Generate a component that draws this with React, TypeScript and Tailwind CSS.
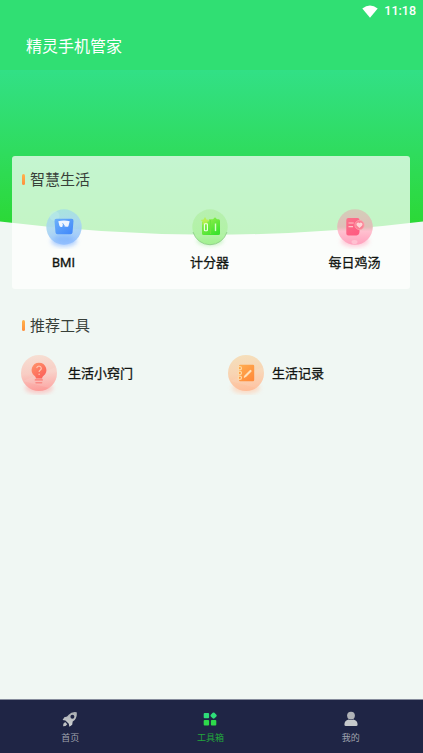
import type { ReactNode } from "react";

interface Tool {
  label: string;
  icon: ReactNode;
}

function BmiIcon() {
  return (
    <svg width="44" height="44" viewBox="0 0 44 44">
      <defs>
        <linearGradient id="bmiBall" x1="0.3" y1="0" x2="0.5" y2="1">
          <stop offset="0" stopColor="#a5e2e0" />
          <stop offset="0.5" stopColor="#a9d6f0" />
          <stop offset="1" stopColor="#93bfff" />
        </linearGradient>
        <linearGradient id="bmiBox" x1="0" y1="0" x2="1" y2="1">
          <stop offset="0" stopColor="#6cb0fa" />
          <stop offset="1" stopColor="#3f86fb" />
        </linearGradient>
        <filter id="soft" x="-50%" y="-50%" width="200%" height="200%">
          <feGaussianBlur stdDeviation="2" />
        </filter>
      </defs>
      <ellipse cx="22" cy="36" rx="13" ry="6" fill="#9cc4ff" opacity="0.7" filter="url(#soft)" />
      <circle cx="22" cy="22" r="17.7" fill="url(#bmiBall)" opacity="0.9" />
      <circle cx="12.5" cy="11" r="5" fill="#c3f0ee" opacity="0.4" />
      <ellipse cx="22" cy="34" rx="10" ry="4" fill="#6fa9ff" opacity="0.4" filter="url(#soft)" />
      <path d="M14.5 13.8h15a2 2 0 0 1 2 2.2l-1 11.5a2 2 0 0 1-2 1.8h-13a2 2 0 0 1-2-1.8l-1-11.5a2 2 0 0 1 2-2.2z" fill="url(#bmiBox)" />
      <path d="M16.3 16.3Q22 14.6 27.7 16.3L26.4 21.2Q25.8 22 24.6 21.7L22.6 21.5 21 19 20.4 21.7Q18.5 22.5 17.5 21.1z" fill="#fff" opacity="0.9" />
      <path d="M20.6 18.2l2 3" stroke="#66a7fa" strokeWidth="0.9" />
    </svg>
  );
}

function ScoreIcon() {
  return (
    <svg width="44" height="44" viewBox="0 0 44 44">
      <defs>
        <linearGradient id="scoreBall" x1="0.5" y1="0" x2="0.5" y2="1">
          <stop offset="0" stopColor="#b6efad" />
          <stop offset="0.65" stopColor="#b0f2a3" />
          <stop offset="1" stopColor="#9df08a" />
        </linearGradient>
        <linearGradient id="scoreBox" x1="0" y1="0" x2="0.7" y2="1">
          <stop offset="0" stopColor="#a5f052" />
          <stop offset="1" stopColor="#3be32d" />
        </linearGradient>
      </defs>
      <ellipse cx="22" cy="35.5" rx="13" ry="5" fill="#a5eda0" opacity="0.65" filter="url(#soft)" />
      <circle cx="22" cy="22" r="17.7" fill="url(#scoreBall)" opacity="0.9" />
      <path d="M5 27a17.7 17.7 0 0 0 34 0" fill="none" stroke="#75b772" strokeWidth="0.8" opacity="0.7" />
      <path d="M25 14.3l2-2 2 2h1.5a1.5 1.5 0 0 1 1.5 1.5v12.7a1.5 1.5 0 0 1-1.5 1.5h-15a1.5 1.5 0 0 1-1.5-1.5V17.8a1.5 1.5 0 0 1 1.5-1.5h5.5v-2z" fill="url(#scoreBox)" />
      <path d="M17 12l1.4 2.5 2.8.4-2 2 .5 2.8-2.7-1.3-2.7 1.3.5-2.8-2-2 2.8-.4z" fill="#b9f04b" opacity="0.9" />
      <rect x="16.4" y="18.8" width="3" height="7" rx="0.7" fill="none" stroke="#f1ffe8" strokeWidth="1.1" />
      <path d="M27.5 18.5v7.6" stroke="#d6ffc8" strokeWidth="1.4" />
      <path d="M22.5 15v14" stroke="#69e53c" strokeWidth="1" />
    </svg>
  );
}

function SoupIcon() {
  return (
    <svg width="44" height="44" viewBox="0 0 44 44">
      <defs>
        <linearGradient id="soupBall" x1="0.5" y1="0" x2="0.5" y2="1">
          <stop offset="0" stopColor="#d3ceb9" />
          <stop offset="0.5" stopColor="#e0bfb9" />
          <stop offset="0.62" stopColor="#ffc0cf" />
          <stop offset="1" stopColor="#ffa0bd" />
        </linearGradient>
        <linearGradient id="soupBook" x1="0" y1="0" x2="0.5" y2="1">
          <stop offset="0" stopColor="#fa748b" />
          <stop offset="1" stopColor="#ff5c82" />
        </linearGradient>
      </defs>
      <ellipse cx="22" cy="36" rx="14" ry="6" fill="#ffb5ca" opacity="0.65" filter="url(#soft)" />
      <circle cx="22" cy="22" r="17.8" fill="url(#soupBall)" />
      <ellipse cx="21.5" cy="37" rx="3" ry="2" fill="#ffd2dc" opacity="0.6" />
      <path d="M15.3 13h9.2a2 2 0 0 1 2 2v11.5q0 3.5-3 4h-8.2a2 2 0 0 1-2-2V15a2 2 0 0 1 2-2z" fill="url(#soupBook)" />
      <path d="M15.5 18h5.2M15.5 21.7h4.5" stroke="#ffc5c7" strokeWidth="1.2" />
      <circle cx="26.5" cy="20" r="4.6" fill="#fa8193" stroke="#fca0ab" strokeWidth="0.9" />
      <path d="M26.5 23l-2.7-2.6a1.7 1.7 0 0 1 2.7-2.1 1.7 1.7 0 0 1 2.7 2.1z" fill="#ffd6d8" />
    </svg>
  );
}

function TipsIcon() {
  return (
    <svg width="44" height="44" viewBox="0 0 44 44">
      <defs>
        <linearGradient id="tipsBall" x1="0.4" y1="0" x2="0.5" y2="1">
          <stop offset="0" stopColor="#f6dfd3" />
          <stop offset="0.5" stopColor="#f8cdc4" />
          <stop offset="1" stopColor="#fd9b98" />
        </linearGradient>
        <linearGradient id="tipsBulb" x1="0" y1="0" x2="0.7" y2="1">
          <stop offset="0" stopColor="#ff966b" />
          <stop offset="1" stopColor="#fc6059" />
        </linearGradient>
      </defs>
      <ellipse cx="22" cy="37" rx="14" ry="6" fill="#fdb5b2" opacity="0.65" filter="url(#soft)" />
      <circle cx="22" cy="22" r="18" fill="url(#tipsBall)" />
      <path d="M6 30L39 16a18 18 0 0 1-7 21z" fill="#fff" opacity="0.1" />
      <path d="M22 11.7a7.4 7.4 0 0 0-4.3 13.4q1.2 1 1.2 2.4h6.2q0-1.4 1.2-2.4A7.4 7.4 0 0 0 22 11.7z" fill="url(#tipsBulb)" />
      <path d="M18.3 28.9h7" stroke="#fb7770" strokeWidth="1.3" strokeLinecap="round" />
      <path d="M19 31.7h5.6" stroke="#fa8a84" strokeWidth="1.5" strokeLinecap="round" />
      <path d="M19.7 17.2q.3-2 2.3-2t2.3 2q0 1.2-1.2 2-1 .7-1 1.9" fill="none" stroke="#ffc5b2" strokeWidth="1.2" />
      <circle cx="22.1" cy="23.2" r="0.75" fill="#ffc5b2" />
    </svg>
  );
}

function NotesIcon() {
  return (
    <svg width="44" height="44" viewBox="0 0 44 44">
      <defs>
        <linearGradient id="notesBall" x1="0.4" y1="0" x2="0.5" y2="1">
          <stop offset="0" stopColor="#f5dfbb" />
          <stop offset="0.5" stopColor="#f8d4b3" />
          <stop offset="1" stopColor="#ffbd99" />
        </linearGradient>
        <linearGradient id="notesBook" x1="0" y1="0" x2="0.7" y2="1">
          <stop offset="0" stopColor="#ffad50" />
          <stop offset="1" stopColor="#ff8c3b" />
        </linearGradient>
      </defs>
      <ellipse cx="22" cy="37" rx="14" ry="6" fill="#ffceb0" opacity="0.65" filter="url(#soft)" />
      <circle cx="22" cy="22" r="18" fill="url(#notesBall)" />
      <path d="M6 30L39 16a18 18 0 0 1-7 21z" fill="#fff" opacity="0.08" />
      <rect x="15" y="13.8" width="15.2" height="16.4" rx="1.2" fill="url(#notesBook)" />
      <g fill="none" stroke="#ffdda9" strokeWidth="1.1">
        <circle cx="15.8" cy="17.2" r="1.7" />
        <circle cx="15.8" cy="22" r="1.7" />
        <circle cx="15.8" cy="26.8" r="1.7" />
      </g>
      <path d="M21.5 25l5-5" stroke="#ffe2bc" strokeWidth="2.2" strokeLinecap="round" />
      <path d="M20 26.5l1.5-1.5" stroke="#ffe2bc" strokeWidth="1.2" />
    </svg>
  );
}

const lifeTools: Tool[] = [
  { label: "BMI", icon: <BmiIcon /> },
  { label: "计分器", icon: <ScoreIcon /> },
  { label: "每日鸡汤", icon: <SoupIcon /> },
];

const recommended: Tool[] = [
  { label: "生活小窍门", icon: <TipsIcon /> },
  { label: "生活记录", icon: <NotesIcon /> },
];

function SectionTitle({ children }: { children: ReactNode }) {
  return (
    <h2 className="flex h-6 items-center gap-[5px] text-[15px] text-[#384039]">
      <span className="mb-[2px] h-[11px] w-[3px] rounded-sm bg-gradient-to-b from-[#ffb24a] to-[#ff8f3e]" />
      <span className="pt-px">{children}</span>
    </h2>
  );
}

function TabBar() {
  return (
    <nav className="grid h-[54px] grid-cols-3 border-t border-[#868c9c] bg-[#1f2545] pr-[2px] text-[9px] text-[#a0a3ae]">
      <div className="flex flex-col items-center pt-[11px]">
        <svg width="16" height="16" viewBox="0 0 16 16">
          <defs>
            <linearGradient id="tabGrey" x1="0" y1="0" x2="0" y2="1">
              <stop offset="0" stopColor="#a9adb1" />
              <stop offset="1" stopColor="#d0d3d4" />
            </linearGradient>
          </defs>
          <path fill="url(#tabGrey)" fillRule="evenodd" d="M14.7 1.3Q9.8.4 6.7 3.8L5.1 5.5 2.3 6.2.6 8.9l2.8.6 3.4 3.3.6 3 2.8-2 .5-3.2 2-1.6Q15.5 5.9 14.7 1.3zM10.4 3.8a2 2 0 1 1 0 4 2 2 0 0 1 0-4z" />
          <path d="M3.1 11.1l2.2 2.2-1.7 1.7-2.5.3.3-2.5z" fill="#bfc2c4" />
        </svg>
        <span className="mt-[5px] leading-[13px]">首页</span>
      </div>
      <div className="flex flex-col items-center pt-[11px] text-[#22a63c]">
        <svg width="16" height="16" viewBox="0 0 16 16">
          <rect x="1.7" y="2" width="5.4" height="5.2" rx="1" fill="#2fdd79" />
          <rect x="1.7" y="9.1" width="5.4" height="5.4" rx="1" fill="#2ed94b" />
          <rect x="8.9" y="9.1" width="5.4" height="5.4" rx="1" fill="#2ed94b" />
          <path d="M11.6 1.4q.5 0 .9.4l1.9 1.9q.7.9 0 1.7l-1.9 1.9q-.9.7-1.8 0L8.8 5.4q-.7-.8 0-1.7l1.9-1.9q.4-.4.9-.4z" fill="#2fdd79" />
        </svg>
        <span className="mt-[5px] leading-[13px]">工具箱</span>
      </div>
      <div className="flex flex-col items-center pt-[11px]">
        <svg width="16" height="16" viewBox="0 0 16 16">
          <circle cx="8" cy="4.6" r="3.9" fill="#b0b3b7" />
          <path d="M5.6 8.4Q8 9.8 10.4 8.4q4.2 1 4.2 5.1 0 1.5-1.5 1.5H2.9q-1.5 0-1.5-1.5 0-4.1 4.2-5.1z" fill="#c6c9cb" />
        </svg>
        <span className="mt-[5px] leading-[13px]">我的</span>
      </div>
    </nav>
  );
}

export default function App() {
  return (
    <div className="relative flex h-[753px] w-[423px] flex-col overflow-hidden bg-[#f0f7f3] font-['Roboto','Noto_Sans_CJK_SC',sans-serif]">
      {/* Curved backdrop behind the first card */}
      <svg className="absolute left-0 top-[70px]" width="423" height="166" viewBox="0 0 423 166">
        <defs>
          <linearGradient id="hero" x1="0" y1="0" x2="0" y2="1">
            <stop offset="0" stopColor="#32e086" />
            <stop offset="0.5" stopColor="#2fdc5e" />
            <stop offset="1" stopColor="#2bd830" />
          </linearGradient>
        </defs>
        <path d="M0 0h423v151.5Q318 164.5 211.5 164.8 105 164.5 0 151.5z" fill="url(#hero)" />
      </svg>

      <header className="h-[70px] bg-[#30df73] text-white">
        <div className="flex h-[22px] items-center justify-end gap-[6px] pr-[7px]">
          <svg width="16" height="13" viewBox="0 0 16 13">
            <path d="M.3 3.5Q8-2.5 15.7 3.5L8 12.7z" fill="#fff" />
          </svg>
          <span className="text-[12.5px] font-medium leading-none">11:18</span>
        </div>
        <h1 className="flex h-12 items-center pl-[26px] pt-px text-[16px]">精灵手机管家</h1>
      </header>

      <main className="relative flex-1">
        <section className="ml-3 mt-[86px] h-[133px] w-[398px] rounded-[3px] bg-[#fffffd]/[0.72] pl-[10px] pt-3">
          <SectionTitle>智慧生活</SectionTitle>
          <div className="mt-[13px] grid grid-cols-[146px_145px_55px] pl-[14px]">
            {lifeTools.map((tool) => (
              <div key={tool.label} className="flex w-[55px] flex-col items-center">
                {tool.icon}
                <span className="mt-1 whitespace-nowrap text-[13px] leading-5 text-[#111511] [-webkit-text-stroke:0.3px_#111511]">{tool.label}</span>
              </div>
            ))}
          </div>
        </section>

        <section className="pl-[22px] pt-[25px]">
          <SectionTitle>推荐工具</SectionTitle>
          <div className="-ml-[5px] mt-[13px] flex gap-[19px]">
            {recommended.map((tool) => (
              <div key={tool.label} className="flex w-[188px] items-center gap-[7px] even:gap-[4px]">
                {tool.icon}
                <span className="pt-[2px] text-[13px] text-[#111511] [-webkit-text-stroke:0.3px_#111511]">{tool.label}</span>
              </div>
            ))}
          </div>
        </section>
      </main>

      <TabBar />
    </div>
  );
}
